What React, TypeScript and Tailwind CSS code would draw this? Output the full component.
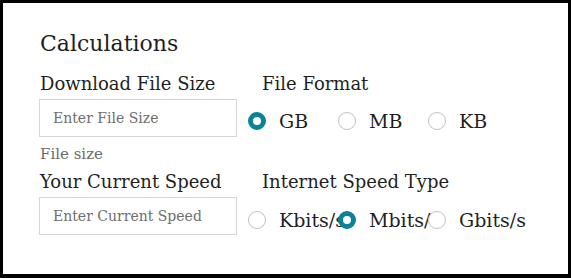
import React from "react";

const serif = { fontFamily: '"DejaVu Serif", "Liberation Serif", serif' };

type Option = { label: string; checked?: boolean };

const RadioGroup = ({ options }: { options: Option[] }) => {
  return (
    <div className="flex -ml-[14px]">
      {options.map((o) => (
        <label key={o.label} className="w-[90px] shrink-0 flex items-center gap-[13px] whitespace-nowrap">
          {o.checked ? (
            <span className="relative w-[18px] h-[18px] shrink-0 rounded-full border-[5.5px] border-[#0b8298] bg-white" />
          ) : (
            <span className="relative w-[18px] h-[18px] shrink-0 rounded-full border border-[#c2c2c2] bg-white" />
          )}
          <span className="text-[19px] leading-[22px] text-[#1f1f1f]">{o.label}</span>
        </label>
      ))}
    </div>
  );
};

const Field = ({ placeholder }: { placeholder: string }) => (
  <input
    type="text"
    placeholder={placeholder}
    className="-ml-px w-[198px] h-[38px] border border-[#d3d6da] px-[13px] text-[14px] text-[#333] placeholder:text-[#6e6e6e] outline-none"
    style={serif}
  />
);

export default function App() {
  return (
    <div
      className="w-[571px] h-[278px] border-[3px] border-b-4 border-black bg-white pl-[37px] pt-[27px] text-[#1f1f1f]"
      style={serif}
    >
      <h2 className="text-[22px] leading-[28px]">Calculations</h2>

      <div className="flex gap-[24px] mt-[14px]">
        <div className="flex flex-col w-[198px]">
          <span className="text-[18px] leading-[24px] whitespace-nowrap">Download File Size</span>
          <div className="mt-[3px]">
            <Field placeholder="Enter File Size" />
          </div>
          <span className="mt-[7px] text-[15px] leading-[20px] text-[#6b6b6b]">File size</span>
        </div>
        <div className="flex flex-col">
          <span className="text-[18px] leading-[24px]">File Format</span>
          <div className="mt-[14px]">
            <RadioGroup options={[{ label: "GB", checked: true }, { label: "MB" }, { label: "KB" }]} />
          </div>
        </div>
      </div>

      <div className="flex gap-[24px] mt-[6px]">
        <div className="flex flex-col w-[198px]">
          <span className="text-[18px] leading-[24px] whitespace-nowrap">Your Current Speed</span>
          <div className="mt-[3px]">
            <Field placeholder="Enter Current Speed" />
          </div>
        </div>
        <div className="flex flex-col">
          <span className="text-[18px] leading-[24px]">Internet Speed Type</span>
          <div className="mt-[15px]">
            <RadioGroup
              options={[{ label: "Kbits/s" }, { label: "Mbits/s", checked: true }, { label: "Gbits/s" }]}
            />
          </div>
        </div>
      </div>
    </div>
  );
}
